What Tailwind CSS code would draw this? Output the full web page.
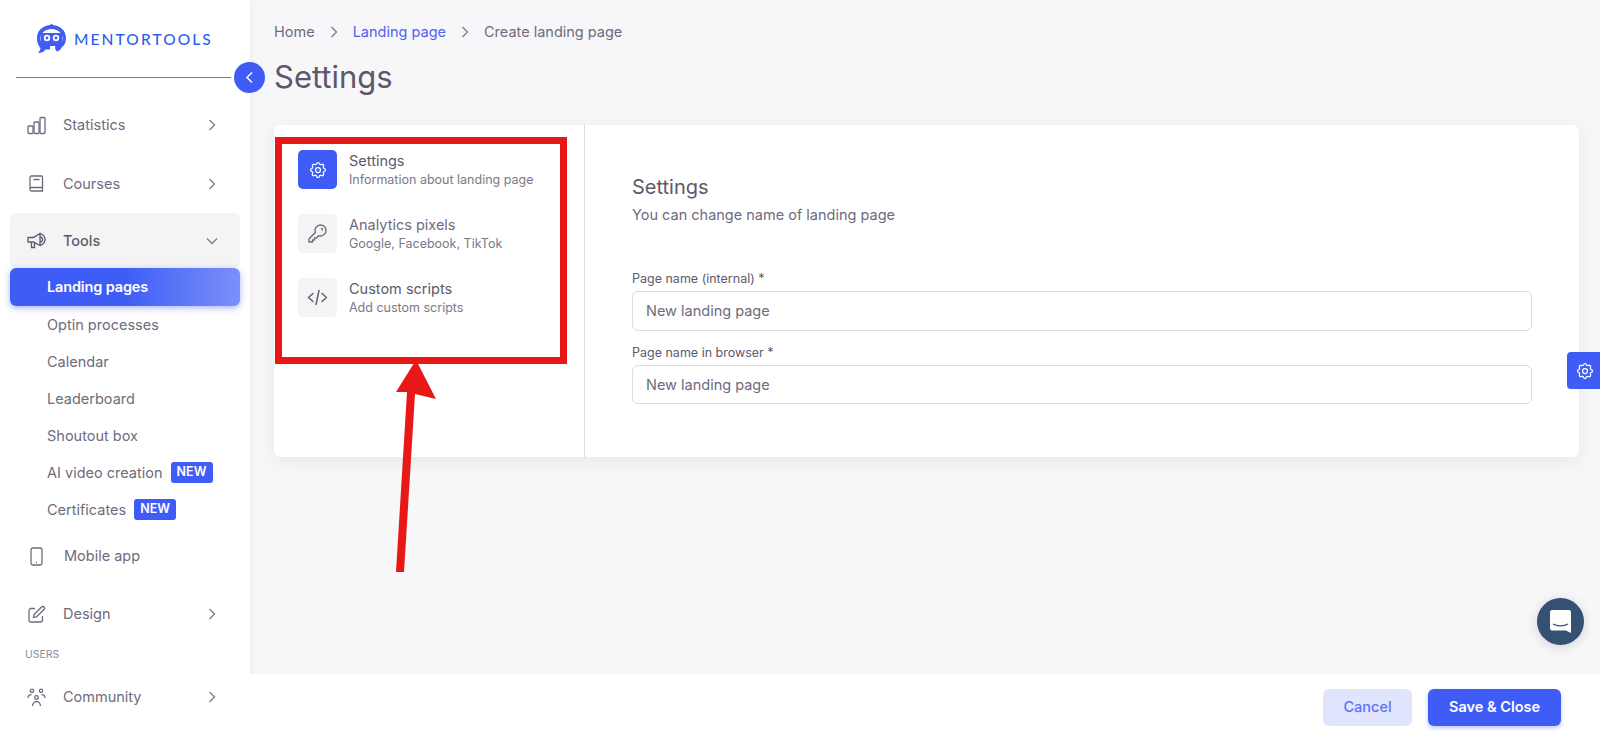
<!DOCTYPE html>
<html><head><meta charset="utf-8"><script src="https://cdn.jsdelivr.net/npm/@tailwindcss/browser@4"></script></head>
<body class="m-0 h-[740px] w-[1600px] overflow-hidden bg-[#f7f7f9] font-['Inter',sans-serif] text-[#5d596c]">
<div class="relative flex h-[740px] w-[1600px]">
  <aside class="relative flex h-full w-[250px] shrink-0 flex-col bg-white shadow-[0_0_8px_rgba(75,70,92,0.08)]">
    <div class="flex h-[77px] items-center pl-[36px] pt-[2px]">
      <svg width="31" height="31" viewBox="0 0 31 31" class="shrink-0"><path d="M15.5 1C7 1 1 6.5 1 14c0 5 2 8.500 3.500 10-.3 2-1 3.500-2.500 5 3.500 0 6-1 7.500-3.500h4.500v-3.500H9C6.500 22 4.500 18 4.500 14 4.500 9 9.500 5 15.500 5s11 4 11 9c0 3-1 6-3 7.500h-2.500l-2 1c0 2 .5 4 2 5 2.500-1 4-2.500 5-4.500 3-2 4-5.500 4-9C30 6.500 24 1 15.500 1z" fill="#3f5cf6"/><path d="M5 9h21v13H5z" fill="#3f5cf6"/><circle cx="11" cy="14" r="3.200" fill="#fff"/><circle cx="20" cy="14" r="3.200" fill="#fff"/><circle cx="11" cy="14" r="1.400" fill="#3f5cf6"/><circle cx="20" cy="14" r="1.400" fill="#3f5cf6"/><circle cx="15.500" cy="1.500" r="1.500" fill="#3f5cf6"/></svg>
      <span class="ml-[7px] text-[15.500px] leading-none font-medium tracking-[0.135em] text-[#2c5ff0] font-['Lato',sans-serif]">MENTORTOOLS</span>
    </div>
    <div class="ml-[16px] h-px w-[215px] bg-[#7d7a8c]"></div>
    <nav class="mt-[18px] flex flex-col">
      <a class="flex h-[58px] items-center pl-[27px] text-[14.500px] text-[#6f6b7d]"><svg width="19" height="19" viewBox="0 0 19 19" fill="none" stroke="#6f6b7d" stroke-width="1.300" class="shrink-0"><rect x="1" y="10" width="5" height="7.500" rx="1"/><rect x="7" y="6" width="5" height="11.500" rx="1"/><rect x="13" y="1.500" width="5" height="16" rx="1"/></svg><span class="ml-[17px]">Statistics</span><svg width="8" height="12" viewBox="0 0 8 12" fill="none" stroke="#7f7c8c" stroke-width="1.300" class="absolute left-[208px]"><path d="M1.500 1l5 5-5 5"/></svg></a>
      <a class="flex h-[59px] items-center pl-[29px] text-[14.500px] text-[#6f6b7d]"><svg width="15" height="17" viewBox="0 0 15 17" fill="none" stroke="#6f6b7d" stroke-width="1.300" class="shrink-0"><path d="M1 14V2.500A1.500 1.500 0 0 1 2.500 1h10a1 1 0 0 1 1 1v14h-11A1.500 1.500 0 0 1 1 14.500 1.500 1.500 0 0 1 2.500 12.500h11M4.500 4.500h6"/></svg><span class="ml-[19px]">Courses</span><svg width="8" height="12" viewBox="0 0 8 12" fill="none" stroke="#7f7c8c" stroke-width="1.300" class="absolute left-[208px]"><path d="M1.500 1l5 5-5 5"/></svg></a>
      <a class="mx-[10px] flex h-[55px] items-center rounded-[6px] bg-[#f4f4f5] pl-[17px] text-[14.500px] font-medium text-[#5d596c]"><svg width="19" height="17" viewBox="0 0 19 17" fill="none" stroke="#5d596c" stroke-width="1.300" class="shrink-0"><path d="M1 5.500h5.500L13 1.500v12l-6.500-3.500H1zM13 5a2.500 2.500 0 0 1 0 5M13 1.500c3 1 5 3.500 5 6s-2 5-5 6M4.500 10v5.500h3V10.500"/></svg><span class="ml-[17px]">Tools</span><svg width="12" height="8" viewBox="0 0 12 8" fill="none" stroke="#7f7c8c" stroke-width="1.300" class="absolute left-[206px]"><path d="M1 1.500l5 5 5-5"/></svg></a>
      <a class="mx-[10px] flex h-[38px] items-center rounded-[6px] bg-linear-to-r from-[#3f5cf6] from-50% to-[#7b90f8] pl-[37px] text-[14.500px] font-semibold tracking-[-0.01em] text-white shadow-[0_2px_6px_rgba(63,92,246,0.45)]">Landing pages</a>
      <div class="flex flex-col pl-[47px] text-[14.500px] text-[#6f6b7d] pt-[0px]">
        <a class="flex h-[37px] items-center">Optin processes</a>
        <a class="flex h-[37px] items-center">Calendar</a>
        <a class="flex h-[37px] items-center">Leaderboard</a>
        <a class="flex h-[37px] items-center">Shoutout box</a>
        <a class="flex h-[37px] items-center">AI video creation<span class="ml-[8px] flex h-[21px] w-[42px] items-center justify-center rounded-[3px] bg-[#3f5cf6] text-[12.500px] font-semibold text-white">NEW</span></a>
        <a class="flex h-[37px] items-center">Certificates<span class="ml-[8px] flex h-[21px] w-[42px] items-center justify-center rounded-[3px] bg-[#3f5cf6] text-[12.500px] font-semibold text-white">NEW</span></a>
      </div>
      <a class="flex h-[56px] items-center pl-[30px] text-[14.500px] text-[#6f6b7d]"><svg width="13" height="19" viewBox="0 0 13 19" fill="none" stroke="#6f6b7d" stroke-width="1.300" class="shrink-0"><rect x="1" y="1" width="11" height="17" rx="1.800"/><path d="M6 15.500h1"/></svg><span class="ml-[21px]">Mobile app</span></a>
      <a class="flex h-[60px] items-center pl-[28px] text-[14.500px] text-[#6f6b7d]"><svg width="18" height="18" viewBox="0 0 18 18" fill="none" stroke="#6f6b7d" stroke-width="1.300" class="shrink-0"><path d="M7 3.500H3A2 2 0 0 0 1 5.500V15a2 2 0 0 0 2 2h9.500a2 2 0 0 0 2-2v-4M6 9.500L13.500 2a1.700 1.700 0 0 1 2.500 2.500L8.500 12 5.500 12.500z"/></svg><span class="ml-[17px]">Design</span><svg width="8" height="12" viewBox="0 0 8 12" fill="none" stroke="#7f7c8c" stroke-width="1.300" class="absolute left-[208px]"><path d="M1.500 1l5 5-5 5"/></svg></a>
      <div class="flex h-[22px] items-center pl-[25px] text-[10.500px] text-[#8f8c9b]">USERS</div>
      <a class="flex h-[62px] items-center pl-[27px] text-[14.500px] text-[#6f6b7d]"><svg width="19" height="19" viewBox="0 0 19 19" fill="none" stroke="#6f6b7d" stroke-width="1.300" class="shrink-0"><circle cx="5" cy="2.800" r="1.700"/><circle cx="14" cy="2.800" r="1.700"/><circle cx="9.500" cy="9.500" r="1.800"/><path d="M1 10c0-2 1.500-3.300 3.500-3.300M18 10c0-2-1.500-3.300-3.500-3.300M5.500 18c0-2.500 1.800-4.500 4-4.500s4 2 4 4.500"/></svg><span class="ml-[17px]">Community</span><svg width="8" height="12" viewBox="0 0 8 12" fill="none" stroke="#7f7c8c" stroke-width="1.300" class="absolute left-[208px]"><path d="M1.500 1l5 5-5 5"/></svg></a>
    </nav>
    <div class="absolute left-[234px] top-[62px] flex h-[31px] w-[31px] items-center justify-center rounded-full bg-[#3f5cf6]"><svg width="9" height="13" viewBox="0 0 9 13" fill="none" stroke="#fff" stroke-width="1.500"><path d="M7 1.500l-5 5 5 5"/></svg></div>
  </aside>

  <main class="relative flex min-w-0 flex-1 flex-col">
    <div class="flex-1 pl-[24px] pr-[21px]">
      <div class="flex h-[24px] mt-[20px] items-center text-[14.500px]">
        <span class="text-[#6f6b7d]">Home</span>
        <svg width="8" height="12" viewBox="0 0 8 12" fill="none" stroke="#7f7c8c" stroke-width="1.300" class="mx-[15px]"><path d="M1.500 1l5 5-5 5"/></svg>
        <span class="text-[#4f62f4]">Landing page</span>
        <svg width="8" height="12" viewBox="0 0 8 12" fill="none" stroke="#7f7c8c" stroke-width="1.300" class="mx-[15px]"><path d="M1.500 1l5 5-5 5"/></svg>
        <span class="text-[#6f6b7d]">Create landing page</span>
      </div>
      <h1 class="mt-[13px] h-[40px] text-[31px] leading-[40px] font-normal text-[#5d596c]">Settings</h1>
      <section class="mt-[28px] flex h-[332px] rounded-[6px] bg-white shadow-[0_4px_16px_rgba(75,70,92,0.09)]">
        <div class="flex w-[311px] shrink-0 flex-col gap-[25px] border-r border-[#dbdade] pl-[24px] pt-[25px]">
          <div class="flex h-[39px] items-center gap-[12px]">
            <div class="flex h-[39px] w-[39px] items-center justify-center rounded-[5px] bg-[#3f5cf6]"><svg width="20" height="20" viewBox="0 0 24 24" fill="none" stroke="#fff" stroke-width="1.500" stroke-linecap="round" stroke-linejoin="round"><path d="M10.325 4.317c.426-1.756 2.924-1.756 3.350 0a1.724 1.724 0 0 0 2.573 1.066c1.543-.940 3.310.826 2.370 2.370a1.724 1.724 0 0 0 1.065 2.572c1.756.426 1.756 2.924 0 3.350a1.724 1.724 0 0 0-1.066 2.573c.940 1.543-.826 3.310-2.370 2.370a1.724 1.724 0 0 0-2.572 1.065c-.426 1.756-2.924 1.756-3.350 0a1.724 1.724 0 0 0-2.573-1.066c-1.543.940-3.310-.826-2.370-2.370a1.724 1.724 0 0 0-1.065-2.572c-1.756-.426-1.756-2.924 0-3.350a1.724 1.724 0 0 0 1.066-2.573c-.940-1.543.826-3.310 2.370-2.370 1 .608 2.296.070 2.572-1.065z"/><circle cx="12" cy="12" r="3"/></svg></div>
            <div><div class="text-[14.500px] leading-[20px] text-[#5d596c]">Settings</div><div class="text-[12.500px] leading-[18px] text-[#7b7889]">Information about landing page</div></div>
          </div>
          <div class="flex h-[39px] items-center gap-[12px]">
            <div class="flex h-[39px] w-[39px] items-center justify-center rounded-[5px] bg-[#f4f4f5]"><svg width="21" height="21" viewBox="0 0 21 21" fill="none" stroke="#6f6b7d" stroke-width="1.400" stroke-linejoin="round" stroke-linecap="round"><path d="M13.500 2a5.500 5.500 0 0 1 5.500 5.500c0 3-2.500 5.500-5.500 5.500-.7 0-1.300-.1-1.900-.3L9.500 15H7.500v2h-2v2H2v-3l6.300-6.600A5.500 5.500 0 0 1 13.500 2z"/><path d="M14.500 5.500a1.500 1.500 0 0 1 1 1.500"/></svg></div>
            <div><div class="text-[14.500px] leading-[20px] text-[#6f6b7d]">Analytics pixels</div><div class="text-[12.500px] leading-[18px] text-[#7b7889]">Google, Facebook, TikTok</div></div>
          </div>
          <div class="flex h-[39px] items-center gap-[12px]">
            <div class="flex h-[39px] w-[39px] items-center justify-center rounded-[5px] bg-[#f4f4f5]"><svg width="21" height="21" viewBox="0 0 21 21" fill="none" stroke="#5d596c" stroke-width="1.400" stroke-linecap="round" stroke-linejoin="round"><path d="M6 6.500L1.500 10.500 6 14.500M15 6.500l4.500 4-4.500 4M12 3.500L9 17.500"/></svg></div>
            <div><div class="text-[14.500px] leading-[20px] text-[#5d596c]">Custom scripts</div><div class="text-[12.500px] leading-[18px] text-[#7b7889]">Add custom scripts</div></div>
          </div>
        </div>
        <div class="flex-1 pl-[47px] pr-[47px] pt-[50px]">
          <h2 class="text-[20px] leading-[24px] font-normal text-[#5d596c]">Settings</h2>
          <p class="mt-[6px] text-[14.500px] leading-[20px] text-[#6f6b7d]">You can change name of landing page</p>
          <label class="mt-[46px] block text-[12.500px] leading-[16px] text-[#5d596c]">Page name (internal) *</label>
          <div class="mt-[4px] flex h-[40px] items-center rounded-[6px] border border-[#dbdade] bg-white pl-[13px] text-[14.500px] text-[#6f6b7d]">New landing page</div>
          <label class="mt-[14px] block text-[12.500px] leading-[16px] text-[#5d596c]">Page name in browser *</label>
          <div class="mt-[4px] flex h-[39px] items-center rounded-[6px] border border-[#dbdade] bg-white pl-[13px] text-[14.500px] text-[#6f6b7d]">New landing page</div>
        </div>
      </section>
    </div>
    <footer class="flex h-[66px] shrink-0 items-center justify-end gap-[16px] bg-white pr-[39px]">
      <div class="flex h-[37px] w-[89px] items-center justify-center rounded-[6px] bg-[#e0e4fd] text-[14.500px] font-medium text-[#5c72f7]">Cancel</div>
      <div class="flex h-[37px] w-[133px] items-center justify-center rounded-[6px] bg-[#3f5cf6] text-[14.500px] font-semibold text-white shadow-[0_2px_4px_rgba(63,92,246,0.35)]">Save &amp; Close</div>
    </footer>
  </main>

  <div class="absolute left-[1567px] top-[352px] flex h-[37px] w-[33px] items-center justify-center rounded-l-[4px] bg-[#3f5cf6] pl-[2px]"><svg width="20" height="20" viewBox="0 0 24 24" fill="none" stroke="#fff" stroke-width="1.500" stroke-linecap="round" stroke-linejoin="round"><path d="M10.325 4.317c.426-1.756 2.924-1.756 3.350 0a1.724 1.724 0 0 0 2.573 1.066c1.543-.940 3.310.826 2.370 2.370a1.724 1.724 0 0 0 1.065 2.572c1.756.426 1.756 2.924 0 3.350a1.724 1.724 0 0 0-1.066 2.573c.940 1.543-.826 3.310-2.370 2.370a1.724 1.724 0 0 0-2.572 1.065c-.426 1.756-2.924 1.756-3.350 0a1.724 1.724 0 0 0-2.573-1.066c-1.543.940-3.310-.826-2.370-2.370a1.724 1.724 0 0 0-1.065-2.572c-1.756-.426-1.756-2.924 0-3.350a1.724 1.724 0 0 0 1.066-2.573c-.940-1.543.826-3.310 2.370-2.370 1 .608 2.296.070 2.572-1.065z"/><circle cx="12" cy="12" r="3"/></svg></div>
  <div class="absolute left-[1537px] top-[598px] flex h-[47px] w-[47px] items-center justify-center rounded-full bg-[#345174] shadow-[0_2px_12px_rgba(0,0,0,0.15)]"><svg width="23" height="25" viewBox="0 0 23 25"><path d="M3 1h17a2 2 0 0 1 2 2v21l-5-2.500H3a2 2 0 0 1-2-2V3a2 2 0 0 1 2-2z" fill="#fff"/><path d="M4 15c4 2.500 11 2.500 15 0" fill="none" stroke="#345174" stroke-width="1.200"/></svg></div>

  <div class="pointer-events-none absolute left-[275px] top-[137px] h-[227px] w-[292px] border-[7px] border-[#e81818]"></div>
  <svg class="pointer-events-none absolute left-[380px] top-[355px]" width="80" height="220" viewBox="0 0 80 220"><path d="M16 217L27 37 16 37 36 5 56 44 35 39 24 217z" fill="#e81818"/></svg>
</div>
</body></html>
